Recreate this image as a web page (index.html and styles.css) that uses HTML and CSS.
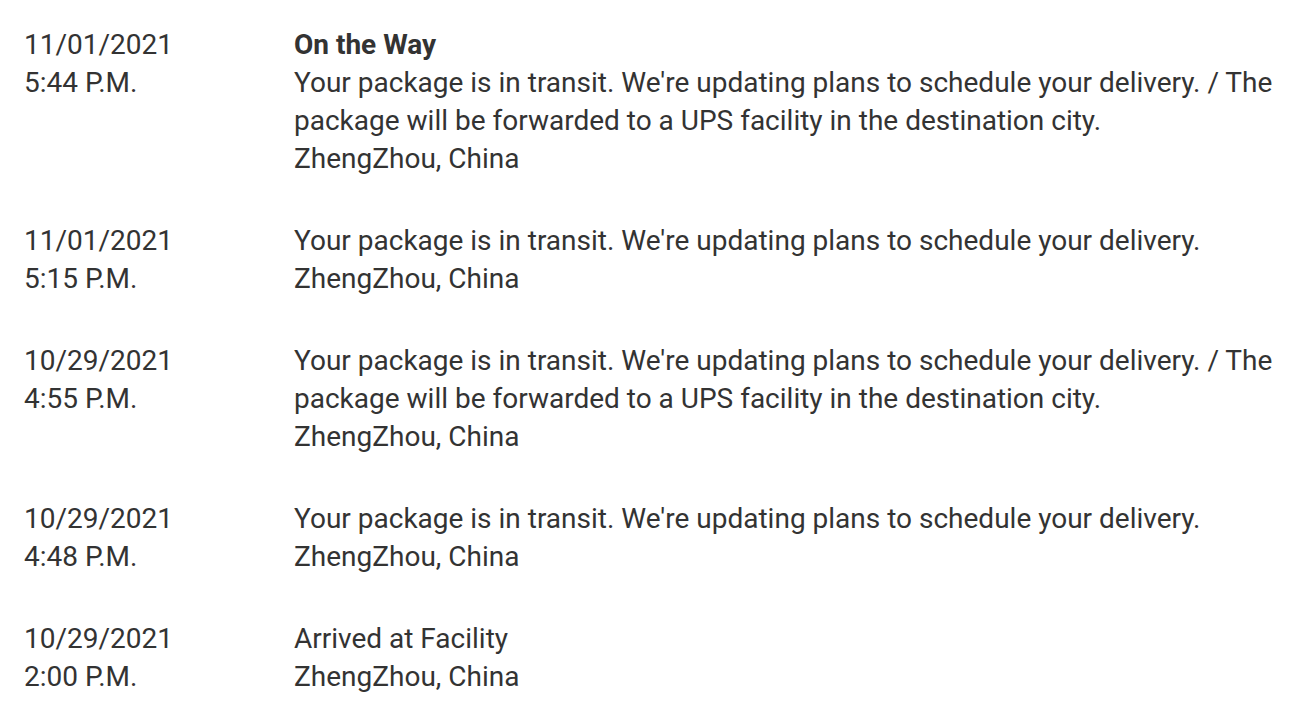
FILE: index.html
```html
<!DOCTYPE html>
<html lang="en">
<head>
<meta charset="utf-8">
<link rel="stylesheet" href="styles.css">
</head>
<body>
<div class="history">
  <div class="event">
    <div class="when">11/01/2021<br>5:44 P.M.</div>
    <div class="what">
      <div class="status">On the Way</div>
      <div>Your package is in transit. We're updating plans to schedule your delivery. / The package will be forwarded to a UPS facility in the destination city.</div>
      <div>ZhengZhou, China</div>
    </div>
  </div>
  <div class="event">
    <div class="when">11/01/2021<br>5:15 P.M.</div>
    <div class="what">
      <div>Your package is in transit. We're updating plans to schedule your delivery.</div>
      <div>ZhengZhou, China</div>
    </div>
  </div>
  <div class="event">
    <div class="when">10/29/2021<br>4:55 P.M.</div>
    <div class="what">
      <div>Your package is in transit. We're updating plans to schedule your delivery. / The package will be forwarded to a UPS facility in the destination city.</div>
      <div>ZhengZhou, China</div>
    </div>
  </div>
  <div class="event">
    <div class="when">10/29/2021<br>4:48 P.M.</div>
    <div class="what">
      <div>Your package is in transit. We're updating plans to schedule your delivery.</div>
      <div>ZhengZhou, China</div>
    </div>
  </div>
  <div class="event">
    <div class="when">10/29/2021<br>2:00 P.M.</div>
    <div class="what">
      <div>Arrived at Facility</div>
      <div>ZhengZhou, China</div>
    </div>
  </div>
</div>
</body>
</html>
```
FILE: styles.css
```css
html, body {
  margin: 0;
  padding: 0;
  background: #ffffff;
}
body {
  font-family: Roboto, "Liberation Sans", sans-serif;
  font-size: 28px;
  line-height: 38px;
  color: #333333;
}
.history {
  display: flex;
  flex-direction: column;
  gap: 44px;
  padding: 26px 20px 0 24px;
}
.event {
  display: grid;
  grid-template-columns: 270px 1fr;
}
.status {
  font-weight: 700;
}
```
